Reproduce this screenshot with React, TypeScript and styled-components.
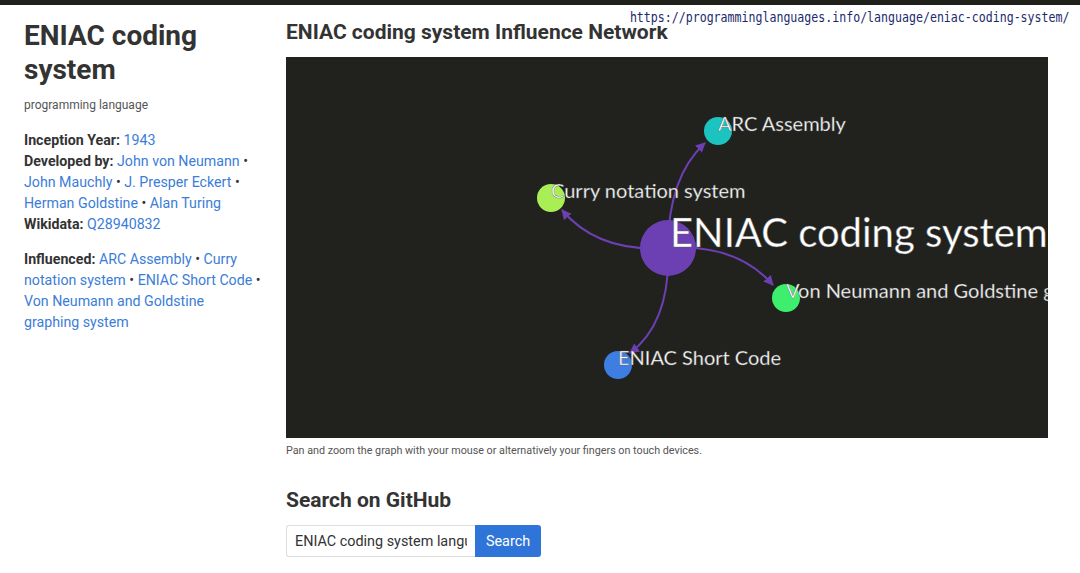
import React from "react";
import styled, { createGlobalStyle } from "styled-components";

const Global = createGlobalStyle`
  html, body { margin: 0; padding: 0; background: #fff; }
  body { font-family: Roboto, "Liberation Sans", Arial, sans-serif; color: #333; }
  * { box-sizing: border-box; }
`;

const TopBar = styled.div`
  height: 5px;
  background: #21211c;
`;

const Page = styled.div`
  display: grid;
  grid-template-columns: 238px 1fr;
  column-gap: 24px;
  padding: 0 32px 0 24px;
`;

const Side = styled.aside`
  display: flex;
  flex-direction: column;
`;

const Title = styled.h1`
  margin: 14px 0 0;
  font-size: 28px;
  line-height: 1.2;
  font-weight: 700;
  color: #333;
`;

const Kind = styled.div`
  margin-top: 10px;
  font-size: 12px;
  line-height: 18px;
  color: #555;
`;

const Info = styled.p`
  margin: ${(p: { $top: number }) => p.$top}px 0 0;
  font-size: 14.2px;
  line-height: 21px;
  color: #333;
`;

const Label = styled.b`
  font-weight: 700;
  color: #333;
`;

const Link = styled.a`
  color: #3b7dd8;
  text-decoration: none;
`;

const Main = styled.main`
  display: flex;
  flex-direction: column;
`;

const H2 = styled.h2`
  margin: ${(p: { $top: number }) => p.$top}px 0 0;
  font-size: 21px;
  line-height: 25px;
  font-weight: 700;
  color: #333;
`;

const GraphBox = styled.div`
  margin-top: 12px;
  height: 381px;
  background: #21221e;
  overflow: hidden;
`;

const Caption = styled.div`
  margin-top: 6px;
  font-size: 10.75px;
  line-height: 14px;
  color: #555;
`;

const SearchRow = styled.form`
  display: flex;
  margin-top: 12px;
`;

const SearchInput = styled.input`
  width: 189px;
  height: 32px;
  border: 1px solid #ddd;
  border-right: none;
  border-radius: 3px 0 0 3px;
  padding: 0 8px;
  font-family: Roboto, "Liberation Sans", Arial, sans-serif;
  font-size: 14.4px;
  color: #333;
  outline: none;
`;

const SearchButton = styled.button`
  width: 66px;
  height: 32px;
  border: none;
  border-radius: 0 3px 3px 0;
  background: #2f74d9;
  color: #fff;
  font-family: Roboto, "Liberation Sans", Arial, sans-serif;
  font-size: 14.4px;
  cursor: pointer;
`;

const UrlTag = styled.div`
  position: absolute;
  top: 9px;
  right: 10px;
  background: #fff;
  padding: 0 1px;
  font-family: "DejaVu Sans Mono", "Liberation Mono", monospace;
  font-size: 13.8px;
  line-height: 17px;
  color: #1b2a6e;
  transform: scaleX(0.84);
  transform-origin: right center;
  white-space: nowrap;
`;

const GraphLabel = styled.text`
  font-family: Lato, "Open Sans", sans-serif;
  fill: #fff;
  stroke: rgba(90, 90, 90, 0.85);
  stroke-width: 0.5px;
`;

type Node = { x: number; y: number; r: number; color: string; label: string; size: number; dx: number };

const nodes: Node[] = [
  { x: 432, y: 74, r: 14, color: "#1cc4c0", label: "ARC Assembly", size: 20, dx: 0 },
  { x: 265, y: 141, r: 14, color: "#a9ee55", label: "Curry notation system", size: 20, dx: 0 },
  { x: 500, y: 241, r: 14, color: "#3def6d", label: "Von Neumann and Goldstine graphing system", size: 20, dx: 0 },
  { x: 332, y: 308, r: 14, color: "#3e7ee2", label: "ENIAC Short Code", size: 20, dx: 0 },
];

const edges = [
  "M382 191 Q382 120 419 86",
  "M382 191 Q312 196 276 153",
  "M382 191 Q450 186 487 228",
  "M382 191 Q385 265 344 296",
];

function Graph() {
  return (
    <svg width="762" height="381" viewBox="0 0 762 381">
      <defs>
        <marker id="arrow" viewBox="0 0 10 10" refX="9" refY="5" markerWidth="5" markerHeight="5" orient="auto">
          <path d="M0 0 L10 5 L0 10 z" fill="#6c3fb2" />
        </marker>
      </defs>
      {edges.map((d, i) => (
        <path key={i} d={d} fill="none" stroke="#6c3fb2" strokeWidth="2" markerEnd="url(#arrow)" />
      ))}
      {nodes.map((n) => (
        <circle key={n.label} cx={n.x} cy={n.y} r={n.r} fill={n.color} />
      ))}
      <circle cx={382} cy={191} r={28} fill="#6c3fb2" />
      {nodes.map((n) => (
        <GraphLabel key={n.label + "t"} x={n.x + n.dx} y={n.y} fontSize={n.size}>
          {n.label}
        </GraphLabel>
      ))}
      <GraphLabel x={384} y={190} fontSize={40}>
        ENIAC coding system
      </GraphLabel>
    </svg>
  );
}

export default function App() {
  return (
    <>
      <Global />
      <TopBar />
      <Page>
        <Side>
          <Title>ENIAC coding system</Title>
          <Kind>programming language</Kind>
          <Info $top={16}>
            <Label>Inception Year:</Label> <Link href="#">1943</Link>
            <br />
            <Label>Developed by:</Label> <Link href="#">John von Neumann</Link> •{" "}
            <Link href="#">John Mauchly</Link> • <Link href="#">J. Presper Eckert</Link> •{" "}
            <Link href="#">Herman Goldstine</Link> • <Link href="#">Alan Turing</Link>
            <br />
            <Label>Wikidata:</Label> <Link href="#">Q28940832</Link>
          </Info>
          <Info $top={14}>
            <Label>Influenced:</Label> <Link href="#">ARC Assembly</Link> • <Link href="#">Curry notation system</Link> •{" "}
            <Link href="#">ENIAC Short Code</Link> • <Link href="#">Von Neumann and Goldstine graphing system</Link>
          </Info>
        </Side>
        <Main>
          <H2 $top={15}>ENIAC coding system Influence Network</H2>
          <GraphBox>
            <Graph />
          </GraphBox>
          <Caption>Pan and zoom the graph with your mouse or alternatively your fingers on touch devices.</Caption>
          <H2 $top={30}>Search on GitHub</H2>
          <SearchRow onSubmit={(e) => e.preventDefault()}>
            <SearchInput defaultValue="ENIAC coding system language" />
            <SearchButton type="submit">Search</SearchButton>
          </SearchRow>
        </Main>
      </Page>
      <UrlTag>https://programminglanguages.info/language/eniac-coding-system/</UrlTag>
    </>
  );
}
